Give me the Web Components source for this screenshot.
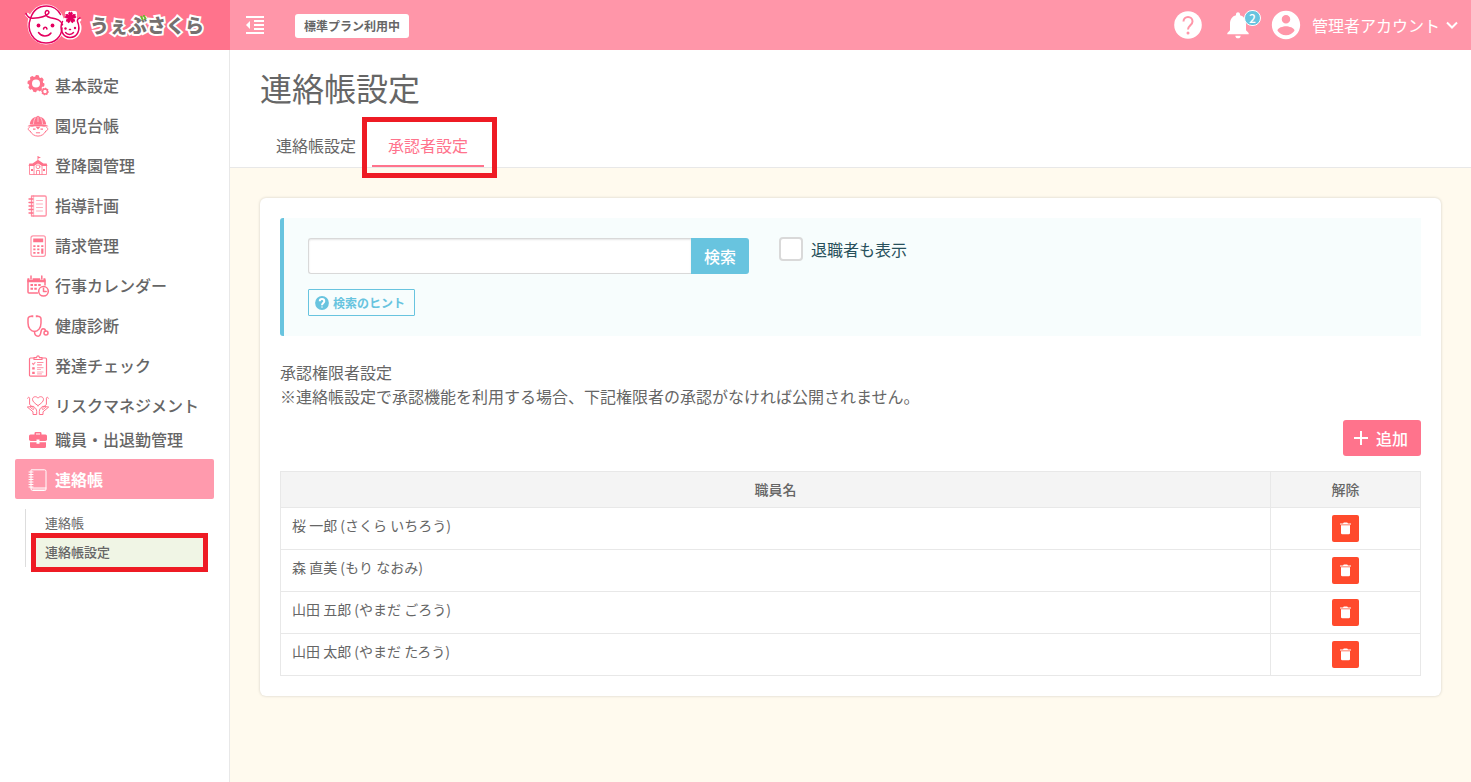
<!DOCTYPE html>
<html lang="ja">
<head>
<meta charset="utf-8">
<title>連絡帳設定 | うぇぶさくら</title>
<style>
  html, body { margin: 0; }
  body {
    font-family: "Noto Sans CJK JP", "Noto Sans", sans-serif;
    font-size: 16px;
    line-height: 24px;
    color: #666;
    background: #fffaee;
    --pink: #ff738c;
    --pink-light: #ff96a9;
    --blue: #68c4df;
    --line: #e8e8e8;
    --mark: #ee1b24;
  }
</style>
</head>
<body>
<web-sakura-app></web-sakura-app>

<script>
const define = (name, html, setup) => {
  const template = document.createElement('template');
  template.innerHTML = html;
  customElements.define(name, class extends HTMLElement {
    connectedCallback() {
      if (this.shadowRoot) return;
      this.attachShadow({ mode: 'open' }).append(template.content.cloneNode(true));
      if (setup) setup(this, this.shadowRoot);
    }
  });
};

const gear = (cx, cy, r, hole, teeth, w) => {
  let s = `<circle cx="${cx}" cy="${cy}" r="${(r + hole) / 2}" fill="none" stroke="currentColor" stroke-width="${r - hole}"/>`;
  for (let i = 0; i < teeth; i++) {
    s += `<rect x="${cx - w / 2}" y="${cy - r - w * .35}" width="${w}" height="${w * .8}" rx="${w * .3}" fill="currentColor" transform="rotate(${i * 360 / teeth + 10} ${cx} ${cy})"/>`;
  }
  return s;
};
const rings = (x, ys) => ys.map(y => `<path d="M${x} ${y}h4"/>`).join('');
const line = 'fill="none" stroke="currentColor" stroke-linecap="round" stroke-linejoin="round"';

const icons = {
  settings: [22, gear(9, 8.6, 7.2, 4, 8, 3.8) + gear(18, 16.5, 3.2, 1.7, 8, 1.7)],
  child: [22, `<path fill="currentColor" d="M10 1.400a1.200 1.200 0 0 1 2 0c4.300.7 7 4 7.200 8.100H2.800C3 5.500 5.700 2.100 10 1.400z"/>
    <g fill="none" stroke="#fff" stroke-width=".6"><path d="M8.600 2.500C7 4.500 6.500 7 6.500 9.600M13.400 2.500c1.600 2 2.100 4.500 2.100 7.100M11 2v5"/></g>
    <path fill="currentColor" d="M.5 11.200c3-2.500 18-2.500 21 0l-4.500.6c-4-1-8-1-12 0z"/>
    <g ${line}><path d="M2.300 12.300c-1.600.3-1.500 3.400.8 3.600 1.400 3.200 4.500 5.200 7.900 5.200s6.500-2 7.900-5.200c2.300-.2 2.400-3.300.8-3.600"/><path d="M9.300 17.800h3.400"/></g>
    <path fill="currentColor" d="M6 13.500h2.500v1.200H6zM13.500 13.500H16v1.200h-2.500zM8.500 11.500h5L11 14.500z"/>`],
  school: [22, `<path fill="currentColor" d="M10.500 1h.8v.4l2.700 1-2.700 1V6h-.8zM5.500 8.500L11 4.800l5.500 3.700h3.200l.7 2.500H15l-4-2.500L7 11H1.600l.7-2.500z"/>
    <g ${line} stroke-width=".8"><path d="M2.500 11v8.500h17V11M7 11v8.500M15 11v8.500"/><circle cx="11" cy="11.800" r="1.900"/><path d="M9.500 19v-3.500h3V19"/></g>
    <path fill="currentColor" d="M4 14h2v2H4zM16 14h2v2h-2z"/>`],
  notebook: [22, `<g ${line} stroke-width="1.300"><path d="M4.500 1h13.500q1.200 0 1.200 1.200v17.600q0 1.200-1.200 1.200H4.500z" opacity=".8"/><path d="M6.500 1v20" opacity=".45"/>${rings(2, [4, 7.5, 11, 14.500, 18])}<path d="M9.500 5.500h6M9.500 9h6M9.500 12.500h6M9.500 16h6" stroke-width="1" opacity=".55"/></g>`],
  calculator: [22, `<rect x="4" y=".9" width="14.400" height="20.400" rx="2" ${line} stroke-width="1.200" opacity=".75"/>
    <path fill="currentColor" d="M6.200 3.600h10v3.600h-10zM6.300 10.200h2.200v1.800H6.300zM10.200 10.200h2.200v1.800h-2.200zM14.200 10.200h2.200v1.800h-2.200zM6.300 13.500h2.200v1.800H6.300zM10.200 13.500h2.200v1.800h-2.200zM14.200 13.500h2.200v5.200h-2.200zM6.300 16.900h2.200v1.800H6.300zM10.200 16.900h2.200v1.800h-2.200z"/>`],
  calendar: [22, `<g ${line} stroke-width="1.500"><path d="M1 5v12q0 1 1 1h8.500M18 10V5"/><path d="M4 .9v3M14.800.9v3"/></g>
    <path fill="currentColor" d="M.4 3.200h2v1.500h3.200V3.200h7.600v1.500h3.200V3.200h2v4H.4zM3.500 9h2.500v2H3.500zM7.300 9h2.500v2H7.300zM11.200 9h2.500v2h-2.500zM3.500 12.700h2.500v2H3.500zM7.300 12.700h2.500v2H7.300z"/>
    <g ${line} stroke-width="1.500"><circle cx="16.500" cy="16.300" r="4.800"/><path d="M16.500 13.300v3.200h2.700"/></g>`],
  stethoscope: [22, `<g ${line} stroke-width="1.500"><path d="M4.500 1.200C2 1.200 1 2 1 4v4c0 5 3 8.500 6.500 8.500S14 13 14 8V4c0-2-1-2.800-3.500-2.800"/><path d="M7.500 16.500c0 3 1.500 4.700 3.700 4.700 4 0 1.500-7.500 4.800-7.500 2 0 2.500 1.300 2.500 2.500"/><circle cx="19" cy="18" r="2"/></g><path fill="currentColor" d="M4.500.2h1.800v2H4.500zM8.800.2h1.800v2H8.800z"/>`],
  checklist: [22, `<g ${line} stroke-width="1.200"><rect x="2.500" y="3" width="17" height="18.200" rx="1"/><path d="M7 4.500V2.600h2.500C10 .3 12 .3 12.500 2.600H15v1.900z" fill="#fff"/><path d="M5.500 8.500l1 1 1.500-2M10.500 7.500H16M10.500 9.800h4" opacity=".8"/><path d="M10.500 12.700H16M10.500 14.500h3M10.500 17H16M10.500 18.800h4" opacity=".6"/></g><path fill="currentColor" d="M5.200 12.200h2.500v2.200H5.200zM5.200 16.700h2.500v2.200H5.200z"/>`],
  care: [22, `<g ${line} stroke-width="1"><path d="M11 10.600C8 8.500 5.500 6.700 5.500 4.300 5.500 1.500 9.500.7 11 3.200c1.500-2.500 5.500-1.700 5.500 1.100 0 2.400-2.500 4.200-5.500 6.300z"/>
    <path d="M.6 3.200C.6 2 2.600 2 2.600 3.200v6.300l3.900 3.300c1 1 0 2.200-1 1.400l-2-1.800M6.500 11.500c2 1.200 3.200 3 3.200 5v3H6v-2.700L.6 12.300z"/>
    <path d="M21.400 3.200c0-1.200-2-1.200-2 0v6.300l-3.900 3.300c-1 1 0 2.200 1 1.400l2-1.800M15.500 11.500c-2 1.200-3.200 3-3.200 5v3H16v-2.700l5.400-4.500z"/></g>`],
  briefcase: [22, `<path fill="currentColor" d="M7.500 5.500V4.200Q7.500 3 8.700 3h4.600q1.200 0 1.200 1.200v1.300h4q1.500 0 1.500 1.500v3.700q-.5 1.300-2 1.300h-5.500v-1.500h-3V12H4q-1.500 0-2-1.300V7q0-1.500 1.500-1.500zM9 5.500h4v-1H9zM3 13.200h6.500v1.500h3v-1.500H19v4.300q0 1.500-1.500 1.500h-13Q3 19 3 17.500z"/>`],
  contact: [22, `<g ${line}><path d="M4.500.8h13q1.500 0 1.500 1.500v18q0 1.200-1.200 1.200H5.700q-1.700 0-1.700-1.800V1.300z"/><path d="M4 19h15"/>${rings(2, [3, 5.500, 8, 10.500, 13, 15.500, 18])}<path d="M6 20.300h12.500" opacity=".6"/></g>`],
  outdent: [24, `<path fill="currentColor" d="M3 21h18v-2H3zM3 12l4 4V8zM11 17h10v-2H11zM3 3v2h18V3zM11 9h10V7H11zM11 13h10v-2H11z"/>`],
  help: [28, `<circle cx="14" cy="14" r="13.800" fill="currentColor"/><path d="M9.500 10.500c0-2.500 2-4.500 4.500-4.500s4.500 2 4.500 4.400c0 3.600-4.500 4-4.500 8.100" fill="none" stroke="var(--help-mark, #fff)" stroke-width="var(--help-weight, 2)"/><circle cx="14" cy="22" r="1.500" fill="var(--help-mark, #fff)"/>`],
  bell: [24, `<path fill="currentColor" d="M12 22c1.100 0 2-.9 2-2h-4c0 1.100.9 2 2 2zm6-6v-5c0-3.070-1.640-5.640-4.500-6.320V4c0-.83-.67-1.500-1.500-1.500s-1.500.67-1.500 1.500v.68C7.630 5.360 6 7.920 6 11v5l-2 2v1h16v-1z"/>`],
  account: [24, `<path fill="currentColor" d="M12 2C6.480 2 2 6.480 2 12s4.480 10 10 10 10-4.480 10-10S17.520 2 12 2zm0 3c1.660 0 3 1.340 3 3s-1.340 3-3 3-3-1.340-3-3 1.340-3 3-3zm0 14.200c-2.500 0-4.710-1.280-6-3.220.03-1.990 4-3.080 6-3.080 1.990 0 5.970 1.090 6 3.080-1.290 1.940-3.500 3.220-6 3.220z"/>`],
  chevron: [12, `<path d="M1 3.500l5 5 5-5" fill="none" stroke="currentColor" stroke-width="2"/>`],
  plus: [14, `<path d="M7 0v14M0 7h14" fill="none" stroke="currentColor" stroke-width="2"/>`],
  trash: [13, `<path fill="currentColor" d="M1 1.500h3l.8-1h3.400l.8 1h3v1H1zM2 3.300h9V11q0 1.300-1.300 1.300H3.300Q2 12.300 2 11z"/>`]
};

define('ws-icon', `<style>
  :host { display: inline-flex; flex: none; width: 22px; height: 22px; }
  svg { width: 100%; height: 100%; display: block; overflow: visible; }
</style>`, (host, root) => {
  const [box, body] = icons[host.getAttribute('name')];
  root.innerHTML += `<svg viewBox="0 0 ${box} ${box}" aria-hidden="true">${body}</svg>`;
});

/* Two smiling faces with a cherry blossom, followed by the product name */
define('ws-logo', `<style>
  :host { display: block; }
  a { display: flex; align-items: center; height: 50px; gap: 6px; padding-left: 24px; text-decoration: none; color: #76706f; }
  svg.faces { width: 60px; height: 44px; flex: none; overflow: visible; }
  .name { font-size: 19px; font-weight: 900; line-height: 24px; white-space: nowrap;
    -webkit-text-stroke: 4px #fff; paint-order: stroke fill; }
  .leafy { position: relative; }
  .leafy svg { position: absolute; top: 4px; right: 0; width: 7px; height: 6px; }
</style>
<a href="#">
  <svg class="faces" viewBox="0 0 60 44" aria-hidden="true">
    <g fill="#fff" stroke="#fff" stroke-width="4" stroke-linejoin="round"><ellipse cx="22" cy="21.500" rx="16.500" ry="18"/><circle cx="46" cy="25" r="9.500"/><path d="M2.500 11l6 6M56 15.500l-3 4M43 10h8v8h-8z"/></g>
    <g fill="none" stroke="#e4005f" stroke-width="1.500" stroke-linecap="round" stroke-linejoin="round">
      <path d="M6.500 15.500C9 7.500 15 3 22.500 3c6 0 11.500 3.500 14 8.500M6.500 15.500C2 27 9 40 22 40c9 0 15.500-6 16-15"/>
      <path d="M2 10.500c1.500 3.500 4 5 7 4.800 6-.4 13-2 15.500-4.800 1.500-2.500-1.500-4-3-1.800-1.300 2.300 1 5 5 6 6.500 1.200 10.500 2.300 12 7"/>
      <path d="M38.500 18.500c-3.500 7 0 16 7.500 16s11-7.500 7.500-16c-.5-2 1-3.500 2.500-3.500"/>
      <path d="M14.500 29.500c3 4.500 9.500 4.500 12.500.5M41.500 29.500c2 2.500 6 2.500 8 0M19.500 26c.5-2.500 3-2.500 3.500 0M45.500 26.500h1"/>
    </g>
    <g fill="#e4005f"><circle cx="14.500" cy="22.500" r="1.900"/><circle cx="28.500" cy="22.500" r="1.900"/><circle cx="41.500" cy="25.500" r="1.200"/><circle cx="51" cy="25" r="1.200"/>
      <path id="petal" d="M46.500 14.500l-2.400-3.800 1-2.200 1.400.9 1.400-.9 1 2.200z"/>
      <path d="M46.500 14.500l-2.400-3.800 1-2.200 1.400.9 1.400-.9 1 2.200z" transform="rotate(72 46.500 14.500)"/>
      <path d="M46.500 14.500l-2.400-3.800 1-2.200 1.400.9 1.400-.9 1 2.200z" transform="rotate(144 46.500 14.500)"/>
      <path d="M46.500 14.500l-2.400-3.800 1-2.200 1.400.9 1.400-.9 1 2.200z" transform="rotate(216 46.500 14.500)"/>
      <path d="M46.500 14.500l-2.400-3.800 1-2.200 1.400.9 1.400-.9 1 2.200z" transform="rotate(288 46.500 14.500)"/>
      <circle cx="46.500" cy="14.500" r="3.200"/></g>
  </svg>
  <span class="name">うぇ<span class="leafy">ぶ<svg viewBox="0 0 7 6" aria-hidden="true"><path d="M1.200 1.800l1.300 2.400M4 .9l1.500 2.500" fill="none" stroke="#6cba2c" stroke-width="2" stroke-linecap="round"/></svg></span>さくら</span>
</a>`);

define('ws-header', `<style>
  :host { display: flex; height: 50px; background: var(--pink-light); color: #fff; }
  ws-logo { width: 230px; flex: none; background: var(--pink); }
  .bar { flex: 1; display: flex; align-items: center; padding: 0 13px; }
  button { font: inherit; color: inherit; border: 0; background: none; padding: 0; display: flex; align-items: center; cursor: pointer; }
  .menu ws-icon { width: 24px; height: 24px; }
  .plan { margin: 2px 0 0 28px; padding: 0 9px; border-radius: 3px; background: #fff; color: #666; font-size: 12px; font-weight: 700; white-space: nowrap; }
  .tools { margin-left: auto; display: flex; align-items: center; }
  .help ws-icon { width: 28px; height: 28px; --help-mark: var(--pink-light); }
  .bell { position: relative; margin: 0 15px 0 20px; }
  .bell ws-icon { width: 32px; height: 32px; }
  .count { position: absolute; top: 1px; right: -7px; box-sizing: border-box; width: 17px; height: 16px; border: 1px solid #fff; border-radius: 8px; background: var(--blue); font-size: 12px; font-weight: 500; line-height: 14px; text-align: center; }
  .account { white-space: nowrap; }
  .account ws-icon { width: 34px; height: 34px; margin-right: 9px; }
  .account .arrow { width: 12px; height: 12px; margin: 0 0 0 6px; }
</style>
<ws-logo></ws-logo>
<div class="bar">
  <button class="menu" aria-label="メニューを閉じる"><ws-icon name="outdent"></ws-icon></button>
  <span class="plan">標準プラン利用中</span>
  <div class="tools">
    <button class="help" aria-label="ヘルプ"><ws-icon name="help"></ws-icon></button>
    <button class="bell" aria-label="お知らせ"><ws-icon name="bell"></ws-icon><span class="count">2</span></button>
    <button class="account"><ws-icon name="account"></ws-icon>管理者アカウント<ws-icon class="arrow" name="chevron"></ws-icon></button>
  </div>
</div>`);

define('ws-nav-item', `<style>
  :host { display: block; }
  a { display: flex; align-items: center; gap: 6px; height: 40px; padding: 0 12px; border-radius: 2px; color: inherit; font-weight: 500; text-decoration: none; white-space: nowrap; }
  ws-icon { margin-top: 2px; color: var(--pink); }
  :host([active]) a { background: #ff9aad; color: #fff; font-weight: 700; }
  :host([active]) ws-icon { color: #fff; }
</style>
<a href="#"><slot></slot></a>`, (host, root) => {
  const icon = document.createElement('ws-icon');
  icon.setAttribute('name', host.getAttribute('icon'));
  root.querySelector('a').prepend(icon);
});

define('ws-sidebar', `<style>
  :host { display: block; box-sizing: border-box; padding: 15px; border-right: 1px solid var(--line); background: #fff; }
  .tight { margin-top: -6px; }
  ul { list-style: none; margin: 10px 10px 0; padding: 0 1px 0 10px; border-left: 1px solid #ddd; font-size: 13px; }
  li { position: relative; }
  li a { display: block; padding: 0 9px 2px; line-height: 27px; color: inherit; text-decoration: none; }
  .current a { background: #f0f5e5; font-weight: 500; }
  .current::after { content: ""; position: absolute; inset: -5px; border: 5px solid var(--mark); pointer-events: none; }
</style>
<nav aria-label="メインメニュー">
  <ws-nav-item icon="settings">基本設定</ws-nav-item>
  <ws-nav-item icon="child">園児台帳</ws-nav-item>
  <ws-nav-item icon="school">登降園管理</ws-nav-item>
  <ws-nav-item icon="notebook">指導計画</ws-nav-item>
  <ws-nav-item icon="calculator">請求管理</ws-nav-item>
  <ws-nav-item icon="calendar">行事カレンダー</ws-nav-item>
  <ws-nav-item icon="stethoscope">健康診断</ws-nav-item>
  <ws-nav-item icon="checklist">発達チェック</ws-nav-item>
  <ws-nav-item icon="care">リスクマネジメント</ws-nav-item>
  <ws-nav-item icon="briefcase" class="tight">職員・出退勤管理</ws-nav-item>
  <ws-nav-item icon="contact" active>連絡帳</ws-nav-item>
  <ul>
    <li><a href="#">連絡帳</a></li>
    <li class="current"><a href="#" aria-current="page">連絡帳設定</a></li>
  </ul>
</nav>`);

define('ws-page-head', `<style>
  :host { display: block; padding: 13px 30px 0; background: #fff; border-bottom: 1px solid var(--line); }
  h1 { margin: 0; font-size: 32px; line-height: 48px; font-weight: 400; }
  nav { display: flex; margin: 14px 0 0; }
  a { position: relative; padding: 8px 16px; border-bottom: 2px solid transparent; color: inherit; text-decoration: none; white-space: nowrap; }
  .current { color: var(--pink); border-color: var(--pink); }
  .current::after { content: ""; position: absolute; inset: -8px -13px -13px -10px; border: 5px solid var(--mark); pointer-events: none; }
</style>
<h1>連絡帳設定</h1>
<nav aria-label="設定タブ"><a href="#">連絡帳設定</a><a href="#" class="current" aria-current="page">承認者設定</a></nav>`);

define('ws-search', `<style>
  :host { display: block; padding: 20px 24px; border-left: 4px solid var(--blue); border-radius: 3px 0 0 3px; background: #f7fdfd; }
  form { display: flex; flex-wrap: wrap; align-items: flex-start; gap: 15px 30px; }
  .field { display: flex; width: 441px; height: 36px; }
  input[type=text] { flex: 1; min-width: 0; box-sizing: border-box; font: inherit; padding: 0 10px; border: 1px solid #d9d9d9; border-right: 0; border-radius: 3px 0 0 3px; background: #fff; box-shadow: inset 0 1px 2px #0000001a; outline: 0; }
  .go { flex: none; width: 58px; padding: 0; border: 0; border-radius: 0 3px 3px 0; background: var(--blue); color: #fff; font: inherit; font-weight: 500; }
  label { display: flex; align-items: center; gap: 8px; height: 22px; color: #27505b; }
  input[type=checkbox] { appearance: none; width: 24px; height: 24px; margin: 0; box-sizing: border-box; border: 2px solid #d9d9d9; border-radius: 4px; background: #fff; }
  .hint { display: flex; align-items: center; gap: 4px; height: 27px; margin-top: 15px; padding: 0 9px 0 6px; border: 1px solid var(--blue); border-radius: 1px; background: none; color: var(--blue); font: inherit; font-size: 12px; font-weight: 700; line-height: 24px; }
  .hint ws-icon { width: 14px; height: 14px; --help-weight: 4; }
</style>
<form role="search">
  <div class="field"><input type="text" aria-label="検索キーワード"><button class="go" type="button">検索</button></div>
  <label><input type="checkbox">退職者も表示</label>
</form>
<button class="hint" type="button"><ws-icon name="help"></ws-icon>検索のヒント</button>`);

define('ws-approver-table', `<style>
  :host { display: block; font-size: 14px; line-height: 21px; }
  table { width: 100%; border-collapse: collapse; table-layout: fixed; }
  th, td { box-sizing: border-box; border: 1px solid var(--line); vertical-align: top; }
  th { padding: 7px 11px; background: #f4f4f4; font-weight: 500; text-align: center; }
  td { padding: 7px 11px; text-align: left; }
  th:last-child { width: 150px; }
  td:last-child { padding: 7px 0; }
  button { display: flex; align-items: center; justify-content: center; width: 27px; height: 27px; margin: 0 auto; padding: 0; border: 0; border-radius: 2px; background: #ff4a2c; color: #fff; }
  ws-icon { width: 13px; height: 13px; }
</style>
<table>
  <thead><tr><th scope="col">職員名</th><th scope="col">解除</th></tr></thead>
  <tbody></tbody>
</table>`, (host, root) => {
  const names = ['桜 一郎 (さくら いちろう)', '森 直美 (もり なおみ)', '山田 五郎 (やまだ ごろう)', '山田 太郎 (やまだ たろう)'];
  root.querySelector('tbody').innerHTML = names.map(name =>
    `<tr><td>${name}</td><td><button aria-label="解除"><ws-icon name="trash"></ws-icon></button></td></tr>`).join('');
});

define('ws-card', `<style>
  :host { display: block; margin: 30px 30px 0; padding: 20px; border-radius: 6px; background: #fff; box-shadow: 0 0 3px #0000002e; }
</style><slot></slot>`);

define('web-sakura-app', `<style>
  :host { display: flex; flex-direction: column; min-height: 100vh; }
  .body { flex: 1; display: flex; }
  ws-sidebar { flex: none; width: 230px; }
  main { flex: 1; min-width: 0; padding-bottom: 30px; }
  p { margin: 24px 0 12px; }
  .actions { display: flex; justify-content: flex-end; margin-bottom: 15px; }
  .add { display: flex; align-items: center; gap: 8px; height: 36px; padding: 0 13px 0 11px; border: 0; border-radius: 3px; background: var(--pink); color: #fff; font: inherit; font-weight: 500; }
  .add ws-icon { width: 14px; height: 14px; }
</style>
<ws-header></ws-header>
<div class="body">
  <ws-sidebar></ws-sidebar>
  <main>
    <ws-page-head></ws-page-head>
    <ws-card>
      <ws-search></ws-search>
      <p>承認権限者設定<br>※連絡帳設定で承認機能を利用する場合、下記権限者の承認がなければ公開されません。</p>
      <div class="actions"><button class="add"><ws-icon name="plus"></ws-icon>追加</button></div>
      <ws-approver-table></ws-approver-table>
    </ws-card>
  </main>
</div>`);
</script>
</body>
</html>
